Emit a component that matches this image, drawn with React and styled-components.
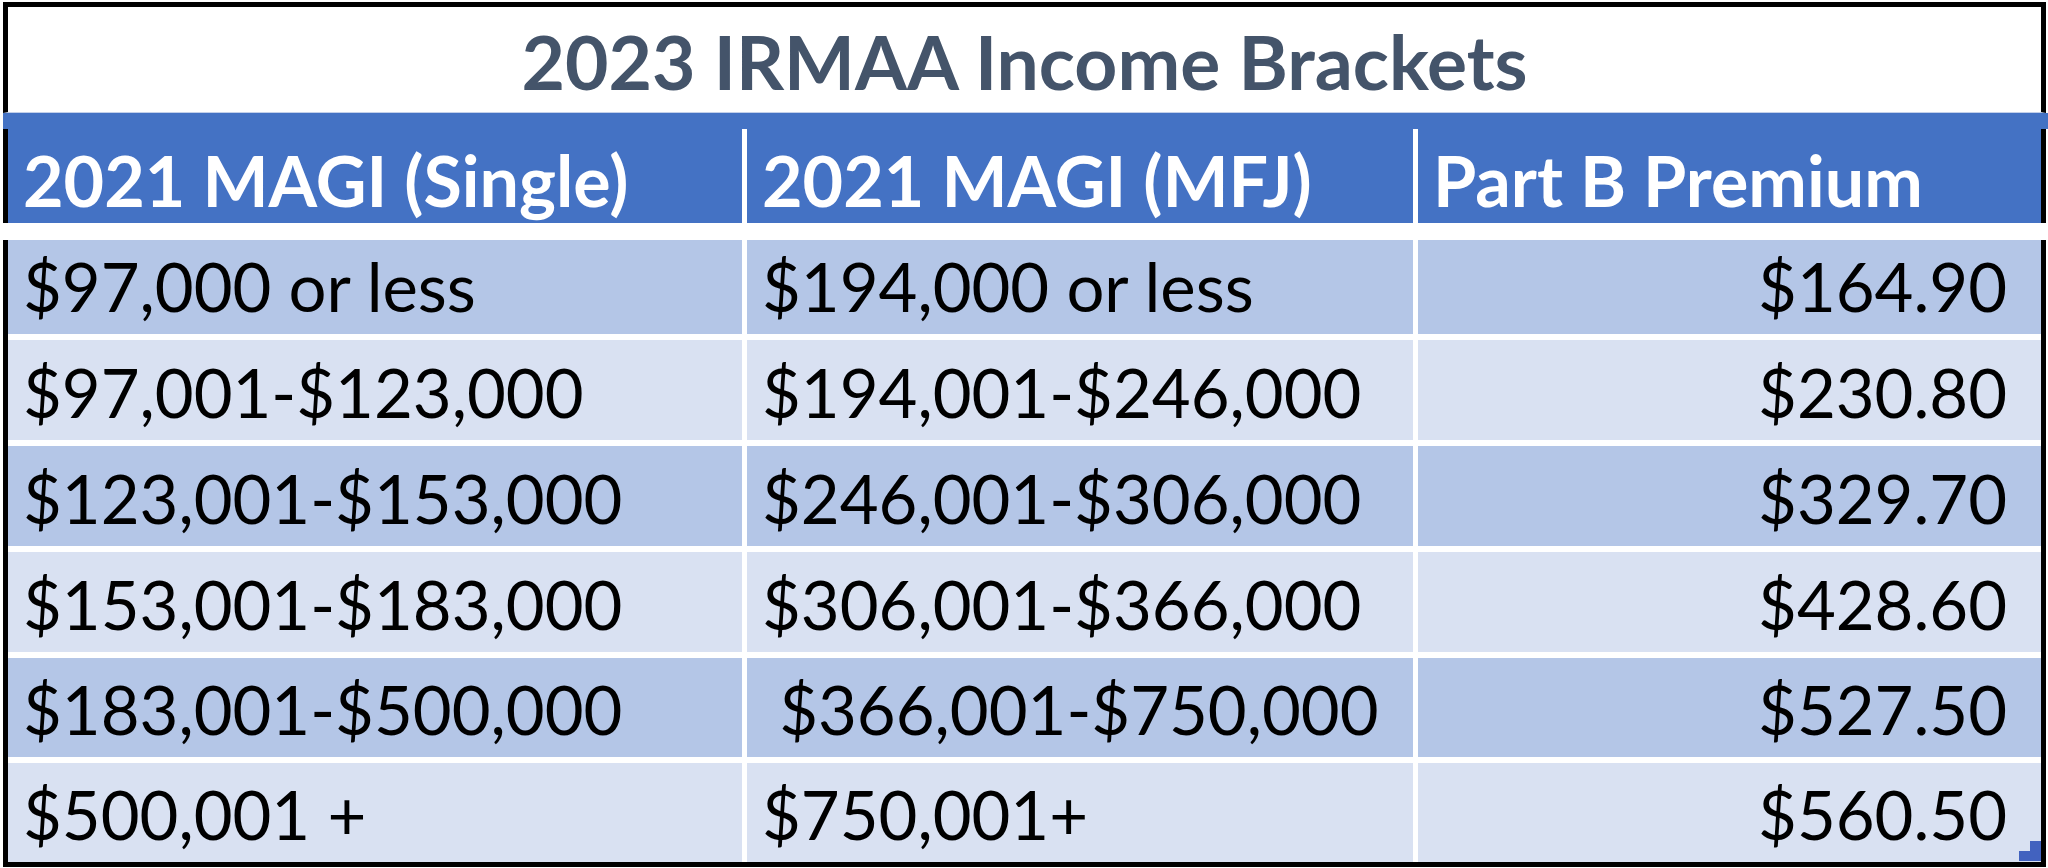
import React from 'react';
import styled, { createGlobalStyle } from 'styled-components';

const GlobalStyle = createGlobalStyle`
  html, body {
    margin: 0;
    padding: 0;
    background: #ffffff;
  }
  body {
    font-family: Lato, "Open Sans", sans-serif;
  }
`;

const Frame = styled.div`
  width: 2043px;
  margin: 2px 0 0 3px;
`;

const TitleCell = styled.div`
  height: 111px;
  box-sizing: border-box;
  border: 5px solid #000;
  border-bottom: 1px solid #c3d0ea;
  display: flex;
  align-items: flex-end;
  justify-content: center;
  padding-bottom: 13px;
`;

const Title = styled.h1`
  margin: 0;
  font-family: Lato, sans-serif;
  font-weight: 700;
  font-size: 75px;
  line-height: 1;
  color: #44546a;
`;

const BlueStrip = styled.div`
  height: 16px;
  width: calc(100% + 2px);
  background: #4472c4;
`;

const Grid = styled.div`
  display: grid;
  grid-template-columns: 734px 666px 1fr;
  column-gap: 5px;
  row-gap: 6px;
  background: #fff;
  border-left: 5px solid #000;
  border-right: 5px solid #000;
`;

const HeaderGrid = styled(Grid)`
  grid-template-rows: 94px;
`;

const BodyGrid = styled(Grid)`
  margin-top: 17px;
  grid-template-rows: 94px 100px 100px 100px 99px 99px;
  border-bottom: 5px solid #000;
`;

const HeadCell = styled.div`
  background: #4472c4;
  color: #fff;
  font-weight: 700;
  font-size: 70px;
  line-height: 1;
  display: flex;
  align-items: flex-end;
  padding: 0 0 8px 15px;
  white-space: pre;
`;

const Cell = styled.div`
  position: relative;
  background: ${p => (p.$dark ? '#b4c6e7' : '#d9e1f2')};
  color: #000;
  font-size: 67px;
  line-height: 1;
  display: flex;
  align-items: flex-end;
  justify-content: ${p => (p.$right ? 'flex-end' : 'flex-start')};
  padding: ${p => (p.$right ? '0 34px 14px 0' : '0 0 14px 15px')};
  white-space: pre;
`;

const Handle = styled.svg`
  position: absolute;
  right: 0;
  bottom: 1px;
  width: 22px;
  height: 20px;
`;

const rows = [
  ['$97,000 or less', '$194,000 or less', '$164.90'],
  ['$97,001-$123,000', '$194,001-$246,000', '$230.80'],
  ['$123,001-$153,000', '$246,001-$306,000', '$329.70'],
  ['$153,001-$183,000', '$306,001-$366,000', '$428.60'],
  ['$183,001-$500,000', ' $366,001-$750,000', '$527.50'],
  ['$500,001 +', '$750,001+', '$560.50'],
];

const App = () => (
  <>
    <GlobalStyle />
    <Frame>
      <TitleCell>
        <Title>2023 IRMAA Income Brackets</Title>
      </TitleCell>
      <BlueStrip />
      <HeaderGrid>
        <HeadCell>2021 MAGI (Single)</HeadCell>
        <HeadCell>2021 MAGI (MFJ)</HeadCell>
        <HeadCell>Part B Premium</HeadCell>
      </HeaderGrid>
      <BodyGrid>
        {rows.map((r, i) => (
          <React.Fragment key={i}>
            <Cell $dark={i % 2 === 0}>{r[0]}</Cell>
            <Cell $dark={i % 2 === 0}>{r[1]}</Cell>
            <Cell $dark={i % 2 === 0} $right>
              {r[2]}
              {i === rows.length - 1 && (
                <Handle viewBox="0 0 22 20">
                  <path d="M11 0H22V20H0V10H11Z" fill="#4262bf" />
                </Handle>
              )}
            </Cell>
          </React.Fragment>
        ))}
      </BodyGrid>
    </Frame>
  </>
);

export default App;
